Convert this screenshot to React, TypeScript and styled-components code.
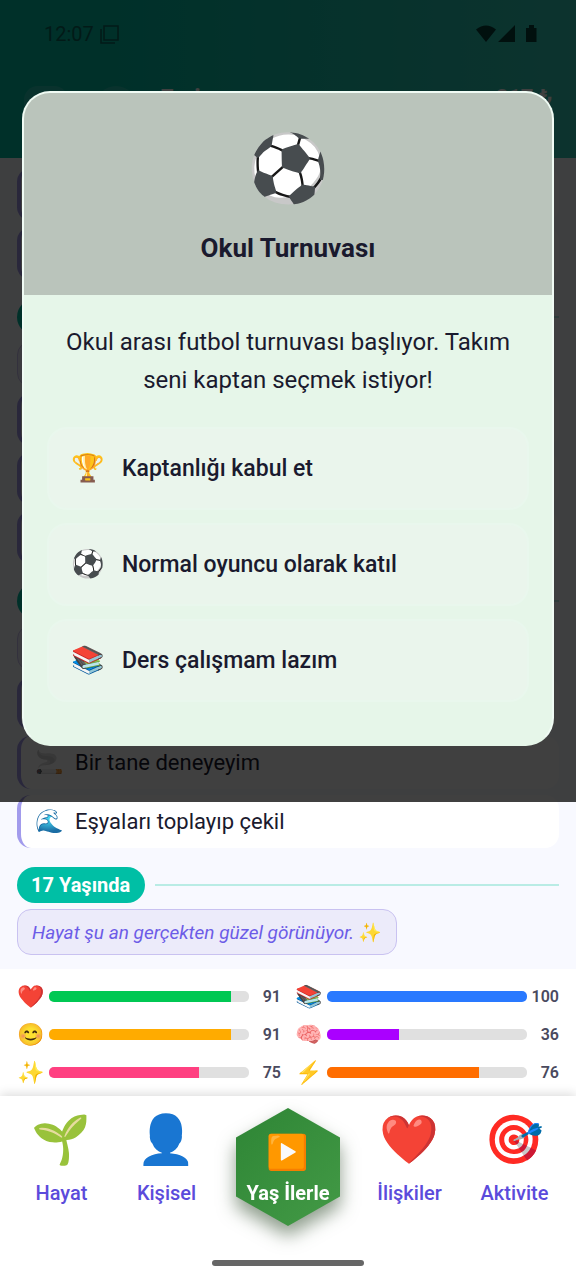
import React from 'react';
import styled, { createGlobalStyle } from 'styled-components';

const GlobalStyle = createGlobalStyle`
  *, *::before, *::after { box-sizing: border-box; }
  body {
    margin: 0;
    background: #ffffff;
    color: #1a1a2e;
    font-family: Roboto, "Noto Sans", sans-serif;
  }
  button { font: inherit; color: inherit; border: 0; background: none; padding: 0; cursor: pointer; }
  p, h1, h2 { margin: 0; }
`;

const Screen = styled.div`
  position: relative;
  min-height: 100vh;
  display: flex;
  flex-direction: column;
`;

/* ---------- header ---------- */

const Header = styled.header`
  height: 158px;
  padding: 22px 24px 0;
  background: linear-gradient(90deg, #00bfa5 20%, #34cbb8 100%);
`;

const StatusBar = styled.div`
  display: flex;
  justify-content: space-between;
  align-items: center;
  height: 24px;
  padding: 0 14px 0 20px;
  font-size: 20px;
  color: #05403a;
`;

const StatusGroup = styled.div`
  display: flex;
  align-items: center;
  gap: 6px;
  color: #0a6a5e;
`;

const Profile = styled.div`
  display: flex;
  align-items: flex-start;
  margin-top: 40px;
  height: 40px;
  color: #ffffff;
  font-size: 24px;
  line-height: 24px;
  font-weight: 700;
`;

const MenuButton = styled.button`
  width: 44px;
  height: 40px;
  margin-right: 28px;
  border-radius: 14px;
  background: rgba(255, 255, 255, 0.15);
`;

const Avatar = styled.span`
  width: 40px;
  height: 40px;
  margin-right: 24px;
  border-radius: 50%;
  background: rgba(255, 255, 255, 0.15);
`;

const Money = styled.span`
  margin-left: auto;
  font-size: 22px;
`;

/* ---------- timeline ---------- */

const Timeline = styled.main`
  display: flex;
  flex-direction: column;
  gap: 6px;
  padding: 10px 17px 14px;
  background: #f8f9ff;
`;

const AgeRow = styled.div`
  display: flex;
  align-items: center;
  gap: 10px;
  margin-top: 13px;
`;

const AgePill = styled.h2`
  min-width: 128px;
  height: 36px;
  padding: 0 14px;
  border-radius: 18px;
  background: #00bfa5;
  color: #ffffff;
  font-size: 20px;
  line-height: 36px;
  font-weight: 700;
`;

const AgeLine = styled.span`
  flex: 1;
  height: 2px;
  background: #b9ece5;
`;

const Quote = styled.p`
  display: flex;
  align-items: center;
  gap: 4px;
  align-self: flex-start;
  min-width: 200px;
  height: 46px;
  padding: 0 14px;
  border: 1px solid #c9c2f1;
  border-radius: 14px;
  background: #ecebfa;
  color: #6c5ce7;
  font-size: 19px;
  font-style: italic;
`;

const EventCard = styled.article`
  display: flex;
  align-items: center;
  gap: 12px;
  height: 53px;
  padding: 0 15px;
  border-left: 4px solid #a29bec;
  border-radius: 14px;
  background: #ffffff;
  font-size: 22px;
`;

const Emoji = styled.span<{ $size: number; $box: number }>`
  flex: none;
  display: inline-flex;
  align-items: center;
  justify-content: center;
  width: ${(p) => p.$box}px;
  height: ${(p) => p.$box}px;
  font-family: "Noto Color Emoji", sans-serif;
  font-size: ${(p) => p.$size}px;
  font-style: normal;
  font-weight: 400;
  line-height: 1;
`;

/* ---------- stats ---------- */

const Stats = styled.section`
  display: grid;
  grid-template-columns: 1fr 1fr;
  gap: 11px 14px;
  padding: 14px 17px 10px;
  background: #ffffff;
`;

const Stat = styled.div`
  display: flex;
  align-items: center;
  height: 27px;
`;

const Track = styled.div`
  flex: 1;
  height: 11px;
  margin-left: 4px;
  border-radius: 5px;
  overflow: hidden;
  background: #e0e0e0;
`;

const Fill = styled.div<{ $color: string }>`
  height: 100%;
  background: ${(p) => p.$color};
`;

const StatValue = styled.span`
  width: 32px;
  text-align: right;
  font-size: 16px;
  font-weight: 600;
  color: #4a4a5e;
`;

/* ---------- bottom navigation ---------- */

const Nav = styled.nav`
  position: relative;
  display: flex;
  flex: 1;
  flex-direction: column;
  justify-content: space-between;
  padding: 12px 9px 14px;
  background: #ffffff;
  box-shadow: 0 -2px 10px rgba(0, 0, 0, 0.14);
`;

const NavItems = styled.div`
  display: grid;
  grid-template-columns: 105fr 105fr 138fr 105fr 105fr;
`;

const NavItem = styled.button`
  display: flex;
  flex-direction: column;
  align-items: center;
  gap: 13px;
  padding-top: 4px;
  color: #5b4bdb;
  font-size: 20px;
  line-height: 24px;
  font-weight: 500;
`;

const HexShadow = styled.div`
  display: flex;
  justify-content: center;
  filter: drop-shadow(0 10px 9px rgba(30, 60, 25, 0.5));
`;

const HexButton = styled.button`
  display: flex;
  flex-direction: column;
  align-items: center;
  gap: 9px;
  width: 104px;
  height: 118px;
  padding-top: 24px;
  clip-path: polygon(50% 0, 100% 25%, 100% 75%, 50% 100%, 0 75%, 0 25%);
  background: linear-gradient(135deg, #2e8535, #439a46);
  color: #ffffff;
  font-size: 20px;
  line-height: 24px;
  font-weight: 700;
`;

const HomeIndicator = styled.span`
  align-self: center;
  width: 152px;
  height: 6px;
  border-radius: 3px;
  background: #666666;
`;

/* ---------- dialog ---------- */

const Overlay = styled.div`
  position: absolute;
  top: 0;
  left: 0;
  right: 0;
  padding: 91px 22px 56px;
  background: rgba(0, 0, 0, 0.75);
`;

const Dialog = styled.section`
  overflow: hidden;
  border: 2px solid #f0fbf4;
  border-bottom-color: #e6f6e9;
  border-radius: 28px;
  background: #e6f6e9;
`;

const DialogHeader = styled.div`
  display: flex;
  flex-direction: column;
  align-items: center;
  gap: 24px;
  padding: 38px 24px 30px;
  background: #bac4bb;
`;

const DialogTitle = styled.h1`
  font-size: 26px;
  line-height: 34px;
  font-weight: 700;
`;

const DialogBody = styled.div`
  display: flex;
  flex-direction: column;
  gap: 28px;
  padding: 28px 23px 42px;
`;

const Message = styled.p`
  font-size: 24px;
  line-height: 38px;
  text-align: center;
`;

const Options = styled.div`
  display: flex;
  flex-direction: column;
  gap: 13px;
`;

const Option = styled.button`
  display: flex;
  align-items: center;
  gap: 18px;
  height: 83px;
  padding: 0 23px;
  border: 2px solid #e9f7ed;
  border-radius: 20px;
  background: #eaf5ec;
  font-size: 23px;
  font-weight: 500;
  text-align: left;
`;

type Event = { emoji?: string; text?: string };

const groups: { title?: string; quote?: string; events: Event[] }[] = [
  { events: [{}, {}, {}] },
  {
    events: [
      {},
      { emoji: '🚬', text: 'Bir tane deneyeyim' },
      { emoji: '🌊', text: 'Eşyaları toplayıp çekil' },
    ],
  },
  { title: '17 Yaşında', quote: 'Hayat şu an gerçekten güzel görünüyor.', events: [] },
];

const stats = [
  { emoji: '❤️', value: 91, color: '#00c853' },
  { emoji: '📚', value: 100, color: '#2979ff' },
  { emoji: '😊', value: 91, color: '#ffab00' },
  { emoji: '🧠', value: 36, color: '#aa00ff' },
  { emoji: '✨', value: 75, color: '#ff4081' },
  { emoji: '⚡', value: 76, color: '#ff6d00' },
];

const options = [
  { emoji: '🏆', text: 'Kaptanlığı kabul et' },
  { emoji: '⚽', text: 'Normal oyuncu olarak katıl' },
  { emoji: '📚', text: 'Ders çalışmam lazım' },
];

const EventRow = ({ emoji, text }: Event) => (
  <EventCard>
    {emoji && <Emoji $size={23} $box={27}>{emoji}</Emoji>}
    {text && <span>{text}</span>}
  </EventCard>
);

const NavButton = ({ emoji, label }: { emoji: string; label: string }) => (
  <NavItem type="button">
    <Emoji $size={48} $box={56}>{emoji}</Emoji>
    {label}
  </NavItem>
);

export default function App() {
  return (
    <>
      <GlobalStyle />
      <Screen>
        <Header>
          <StatusBar>
            <StatusGroup>
              <span>12:07</span>
              <svg width="19" height="19" viewBox="0 0 19 19" fill="none" stroke="currentColor" strokeWidth="1.6">
                <path d="M4 1h14v14H4zM1 4v14h14" />
              </svg>
            </StatusGroup>
            <svg width="62" height="18" viewBox="0 0 62 18" fill="currentColor">
              <path d="M0 4.500Q10 -3.500 20 4.500L10 17zM39 0v17H22zM50 3h3V0h5v3h2.500v14H50z" />
            </svg>
          </StatusBar>
          <Profile>
            <MenuButton type="button" />
            <Avatar />
            <span>Emin</span>
            <Money>217 ₺</Money>
          </Profile>
        </Header>

        <Timeline>
          <EventRow />
          <EventRow />
          {groups.map((g, i) => (
            <React.Fragment key={i}>
              <AgeRow>
                <AgePill>{g.title}</AgePill>
                <AgeLine />
              </AgeRow>
              <Quote>
                {g.quote}
                {g.quote && <Emoji $size={19} $box={24}>✨</Emoji>}
              </Quote>
              {g.events.map((e, j) => (
                <EventRow key={j} {...e} />
              ))}
            </React.Fragment>
          ))}
        </Timeline>

        <Stats>
          {stats.map((s) => (
            <Stat key={s.emoji}>
              <Emoji $size={22} $box={28}>{s.emoji}</Emoji>
              <Track role="progressbar" aria-valuenow={s.value} aria-valuemin={0} aria-valuemax={100}>
                <Fill $color={s.color} style={{ width: `${s.value}%` }} />
              </Track>
              <StatValue>{s.value}</StatValue>
            </Stat>
          ))}
        </Stats>

        <Nav>
          <NavItems>
            <NavButton emoji="🌱" label="Hayat" />
            <NavButton emoji="👤" label="Kişisel" />
            <HexShadow>
              <HexButton type="button">
                <Emoji $size={34} $box={40}>▶️</Emoji>
                Yaş İlerle
              </HexButton>
            </HexShadow>
            <NavButton emoji="❤️" label="İlişkiler" />
            <NavButton emoji="🎯" label="Aktivite" />
          </NavItems>
          <HomeIndicator />
        </Nav>

        <Overlay>
          <Dialog role="dialog" aria-labelledby="event-title">
            <DialogHeader>
              <Emoji $size={66} $box={76}>⚽</Emoji>
              <DialogTitle id="event-title">Okul Turnuvası</DialogTitle>
            </DialogHeader>
            <DialogBody>
              <Message>Okul arası futbol turnuvası başlıyor. Takım seni kaptan seçmek istiyor!</Message>
              <Options>
                {options.map((o) => (
                  <Option key={o.text} type="button">
                    <Emoji $size={27} $box={32}>{o.emoji}</Emoji>
                    {o.text}
                  </Option>
                ))}
              </Options>
            </DialogBody>
          </Dialog>
        </Overlay>
      </Screen>
    </>
  );
}
